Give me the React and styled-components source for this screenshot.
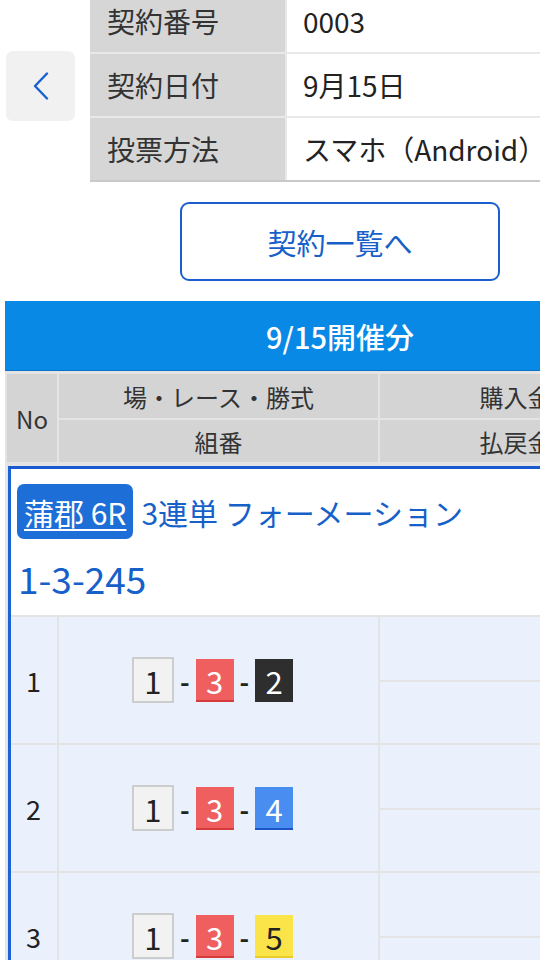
import React from 'react';
import styled, { createGlobalStyle } from 'styled-components';

const GlobalStyle = createGlobalStyle`
  html, body {
    margin: 0;
    padding: 0;
    overflow: hidden;
    background: #fff;
  }
  body {
    font-family: "Noto Sans CJK JP", "Noto Sans", sans-serif;
    color: #222;
  }
`;

const Viewport = styled.div`
  width: 540px;
  height: 960px;
  overflow: hidden;
`;

const Page = styled.div`
  width: 680px;
  padding: 0 5px;
  box-sizing: border-box;
  margin-top: -10px;
`;

const InfoSection = styled.div`
  display: flex;
  align-items: center;
  gap: 15px;
`;

const BackButton = styled.button`
  width: 69px;
  height: 70px;
  margin-left: 1px;
  border: none;
  border-radius: 7px;
  background: #f1f1f1;
  display: flex;
  align-items: center;
  justify-content: center;
  padding: 0;
  flex-shrink: 0;
`;

const InfoTable = styled.div`
  flex: 1;
  display: grid;
  grid-template-columns: 195px 1fr;
  grid-auto-rows: 62px;
  gap: 2px;
  background: #e8e8e8;
  border-bottom: 2px solid #c9c9c9;
`;

const InfoLabel = styled.div`
  background: #d6d6d6;
  display: flex;
  align-items: center;
  padding-left: 17px;
  font-size: 28px;
  color: #333;
`;

const InfoValue = styled.div`
  background: #fff;
  display: flex;
  align-items: center;
  padding-left: 16px;
  font-size: 28px;
  color: #222;
  white-space: nowrap;
`;

const ListButton = styled.button`
  display: block;
  width: 320px;
  height: 79px;
  margin: 20px auto;
  border: 2px solid #1b5fcf;
  border-radius: 9px;
  background: #fff;
  color: #1660c9;
  font-family: inherit;
  font-size: 29px;
`;

const SectionBar = styled.div`
  height: 69px;
  background: #0989e6;
  border-bottom: 1px solid #0a6fc8;
  color: #fff;
  font-size: 29px;
  font-weight: 500;
  display: flex;
  align-items: center;
  justify-content: center;
`;

const Table = styled.div`
  border-left: 2px solid #e4e4e4;
  background: #e4e4e4;
  padding-top: 3px;
`;

const HeadGrid = styled.div`
  display: grid;
  grid-template-columns: 50px 319px 1fr;
  grid-template-rows: 44px 42px;
  gap: 2px;
`;

const HeadCell = styled.div`
  background: #d4d4d4;
  display: flex;
  align-items: center;
  justify-content: center;
  font-size: 24px;
  color: #333;
  white-space: nowrap;
  grid-row: ${(p) => (p.$span ? '1 / 3' : 'auto')};
`;

const Group = styled.div`
  margin-top: 4px;
  margin-left: 1px;
  border-top: 3px solid #1a5ad0;
  border-left: 3px solid #1a62d6;
`;

const GroupHead = styled.div`
  background: #fff;
  height: 146px;
  box-sizing: border-box;
  padding: 15px 0 0 6px;
  color: #1660c9;
`;

const RaceLine = styled.div`
  display: flex;
  align-items: center;
  gap: 8px;
  font-size: 30px;
  white-space: nowrap;
`;

const RaceBadge = styled.span`
  display: inline-flex;
  align-items: center;
  height: 55px;
  padding: 0 7px;
  border-radius: 7px;
  background: #1e6ed8;
  color: #fff;
  text-decoration: underline;
  text-underline-offset: 4px;
  text-decoration-thickness: 2px;
`;

const Combination = styled.div`
  font-size: 37px;
  line-height: 1;
  margin-top: 21px;
  margin-left: 1px;
`;

const RowsGrid = styled.div`
  margin-top: 2px;
  display: grid;
  grid-template-columns: 46px 319px 1fr;
  gap: 2px;
`;

const Cell = styled.div`
  background: #eaf1fc;
  height: 126px;
  display: flex;
  align-items: center;
  justify-content: ${(p) => (p.$center ? 'center' : 'flex-start')};
  padding-left: ${(p) => (p.$center ? '0' : '15px')};
  font-size: 27px;
  color: #222;
`;

const SplitCell = styled.div`
  display: grid;
  grid-template-rows: 63px 61px;
  gap: 2px;
`;

const SubCell = styled.div`
  background: #eaf1fc;
`;

const Boxes = styled.div`
  display: flex;
  align-items: center;
  margin-right: 12px;
`;

const boxColors = {
  1: { bg: '#f2f2f2', fg: '#222', border: '2px solid #cdcdcd', w: 38, h: 42 },
  2: { bg: '#2e2e2e', fg: '#fff', border: 'none', w: 38, h: 43 },
  3: { bg: '#ef5f5f', fg: '#fff', border: 'none', bottom: '#d63b3b', w: 38, h: 43 },
  4: { bg: '#4a8df0', fg: '#fff', border: 'none', bottom: '#1d55c9', w: 38, h: 43 },
  5: { bg: '#fbe44a', fg: '#222', border: 'none', bottom: '#e8cc2a', w: 38, h: 43 },
};

const Box = styled.span`
  display: inline-flex;
  align-items: center;
  justify-content: center;
  width: ${(p) => boxColors[p.$n].w}px;
  height: ${(p) => boxColors[p.$n].h}px;
  background: ${(p) => boxColors[p.$n].bg};
  color: ${(p) => boxColors[p.$n].fg};
  border: ${(p) => boxColors[p.$n].border};
  box-shadow: ${(p) => (boxColors[p.$n].bottom ? `inset 0 -2px 0 ${boxColors[p.$n].bottom}` : 'none')};
  font-size: 31px;
  line-height: 1;
`;

const Dash = styled.span`
  margin: 0 6px;
  font-size: 26px;
  font-weight: 700;
  color: #222;
`;

const BackIcon = () => (
  <svg width="16" height="28" viewBox="0 0 16 28" fill="none">
    <path d="M14 1.5 L2 14 L14 26.5" stroke="#1660d0" strokeWidth="2.4" strokeLinecap="round" strokeLinejoin="round" />
  </svg>
);

const info = [
  ['契約番号', '0003'],
  ['契約日付', '9月15日'],
  ['投票方法', 'スマホ（Android）'],
];

const rows = [
  [1, 3, 2],
  [1, 3, 4],
  [1, 3, 5],
];

export default function App() {
  return (
    <Viewport>
      <GlobalStyle />
      <Page>
        <InfoSection>
          <BackButton aria-label="戻る">
            <BackIcon />
          </BackButton>
          <InfoTable>
            {info.map(([label, value]) => (
              <React.Fragment key={label}>
                <InfoLabel>{label}</InfoLabel>
                <InfoValue>{value}</InfoValue>
              </React.Fragment>
            ))}
          </InfoTable>
        </InfoSection>

        <ListButton>契約一覧へ</ListButton>

        <SectionBar>9/15開催分</SectionBar>
        <Table>
          <HeadGrid>
            <HeadCell $span>No</HeadCell>
            <HeadCell>場・レース・勝式</HeadCell>
            <HeadCell>購入金額</HeadCell>
            <HeadCell>組番</HeadCell>
            <HeadCell>払戻金額</HeadCell>
          </HeadGrid>

          <Group>
            <GroupHead>
              <RaceLine>
                <RaceBadge>蒲郡 6R</RaceBadge>
                <span>3連単 フォーメーション</span>
              </RaceLine>
              <Combination>1-3-245</Combination>
            </GroupHead>
            <RowsGrid>
              {rows.map((combo, i) => (
                <React.Fragment key={i}>
                  <Cell>{i + 1}</Cell>
                  <Cell $center>
                    <Boxes>
                      {combo.map((n, j) => (
                        <React.Fragment key={j}>
                          {j > 0 && <Dash>-</Dash>}
                          <Box $n={n}>{n}</Box>
                        </React.Fragment>
                      ))}
                    </Boxes>
                  </Cell>
                  <SplitCell>
                    <SubCell />
                    <SubCell />
                  </SplitCell>
                </React.Fragment>
              ))}
            </RowsGrid>
          </Group>
        </Table>
      </Page>
    </Viewport>
  );
}
